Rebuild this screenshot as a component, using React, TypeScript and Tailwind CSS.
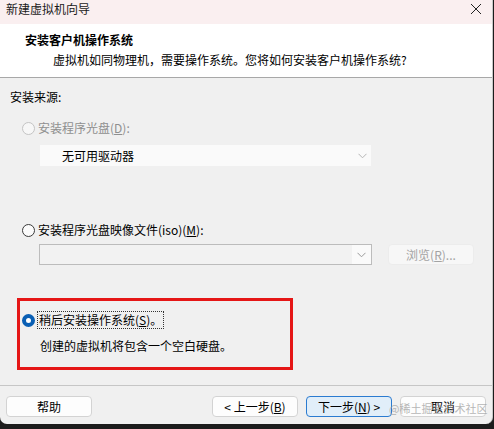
import React from "react";

const font = { fontFamily: '"Noto Sans CJK SC", "Noto Sans", sans-serif' };

function Chevron({ color = "#9a9a9a" }: { color?: string }) {
  return (
    <svg width="9" height="6" viewBox="0 0 9 6" fill="none">
      <path d="M0.5 0.8 L4.5 4.8 L8.5 0.8" stroke={color} strokeWidth="1" />
    </svg>
  );
}

function Radio({ state }: { state: "disabled" | "off" | "on" }) {
  if (state === "on") {
    return <span className="block h-[13px] w-[13px] rounded-full border-[4px] border-[#0a5fb4] bg-white" />;
  }
  if (state === "disabled") {
    return <span className="block h-[13px] w-[13px] rounded-full border border-[#c4c4c4] bg-[#f7f7f7]" />;
  }
  return <span className="block h-[13px] w-[13px] rounded-full border border-[#3a3a3a] bg-[#fbfbfb]" />;
}

function Btn({ children, primary }: { children: React.ReactNode; primary?: boolean }) {
  return (
    <button
      className={
        primary
          ? "flex h-[21px] w-[86px] items-center justify-center rounded-[4px] border border-[#2b7bd0] bg-[#e1eef9] text-[12px] text-black"
          : "flex h-[21px] w-[86px] items-center justify-center rounded-[4px] border border-[#d3d3d3] bg-[#fdfdfd] text-[12px] text-black"
      }
    >
      {children}
    </button>
  );
}

export default function App() {
  return (
    <div className="h-[429px] w-[494px] overflow-hidden bg-[#1c1c1c] leading-[16px]" style={font}>
      <div className="flex h-[424px] w-[493px] flex-col overflow-hidden rounded-b-[7px] border-r border-[#c8c8c8] bg-[#f0f0f0] text-[12px] text-black">
        {/* title bar */}
        <div className="flex h-[24px] shrink-0 items-start justify-between bg-[#faeff0] pl-[6px] pr-[10px] pt-[1px]">
          <span className="text-[12px] text-[#1a1a1a]">新建虚拟机向导</span>
          <svg width="12" height="12" viewBox="0 0 12 12" className="mt-[2px]">
            <path d="M1 1 L11 11 M11 1 L1 11" stroke="#222" strokeWidth="1" />
          </svg>
        </div>

        {/* header */}
        <div className="h-[54px] shrink-0 border-b border-[#a8a8a8] bg-white pt-[8px]">
          <div className="pl-[25px] text-[12px] font-bold">安装客户机操作系统</div>
          <div className="mt-[4px] pl-[53px]">虚拟机如同物理机，需要操作系统。您将如何安装客户机操作系统?</div>
        </div>

        {/* body */}
        <div className="flex flex-1 flex-col pl-[10px] pt-[11px]">
          <div>安装来源:</div>

          <div className="mt-[15px] flex items-center gap-[3px] pl-[12px] text-[#8f8f8f]">
            <Radio state="disabled" />
            <span>
              安装程序光盘(<span className="underline">D</span>):
            </span>
          </div>
          <div className="ml-[30px] mt-[9px] flex h-[21px] w-[331px] items-center justify-between bg-[#fafafa] pl-[22px] pr-[4px]">
            <span>无可用驱动器</span>
            <Chevron color="#b5b5b5" />
          </div>

          <div className="mt-[56px] flex items-center gap-[3px] pl-[12px]">
            <Radio state="off" />
            <span>
              安装程序光盘映像文件(iso)(<span className="underline">M</span>):
            </span>
          </div>
          <div className="mt-[6px] flex items-center gap-[16px]">
            <div className="ml-[29px] flex h-[21px] w-[333px] border border-[#bcbcbc] bg-[#fafafa]">
              <div className="h-full w-[312px] bg-[#f2f2f2]" />
              <div className="flex flex-1 items-center justify-center">
                <Chevron />
              </div>
            </div>
            <div className="flex h-[21px] w-[86px] items-center justify-center rounded-[4px] border border-[#ececec] bg-[#f7f7f7] text-[#a3a3a3]">
              浏览(<span className="underline">R</span>)...
            </div>
          </div>

          <div className="ml-[7px] mt-[33px] h-[72px] w-[276px] border-[3px] border-[#e51616] pl-[2px] pt-[10px]">
            <div className="flex items-center gap-[2px]">
              <Radio state="on" />
              <span className="border border-dotted border-[#333] px-px">
                稍后安装操作系统(<span className="underline">S</span>)。
              </span>
            </div>
            <div className="mt-[9px] pl-[18px]">创建的虚拟机将包含一个空白硬盘。</div>
          </div>
        </div>

        {/* footer */}
        <div className="relative h-[39px] shrink-0 border-t border-[#c6c6c6] px-[6px] pt-[10px]">
          <div className="flex items-center">
            <Btn>帮助</Btn>
            <div className="ml-auto flex gap-[8px]">
              <Btn>
                &lt; 上一步(<span className="underline">B</span>)
              </Btn>
              <Btn primary>
                下一步(<span className="underline">N</span>) &gt;
              </Btn>
              <Btn>取消</Btn>
            </div>
          </div>
          <span className="pointer-events-none absolute left-[389px] top-[15px] text-[11px] leading-[14px] text-[#9a9a9a] opacity-70">
            @稀土掘金技术社区
          </span>
        </div>
      </div>
    </div>
  );
}
